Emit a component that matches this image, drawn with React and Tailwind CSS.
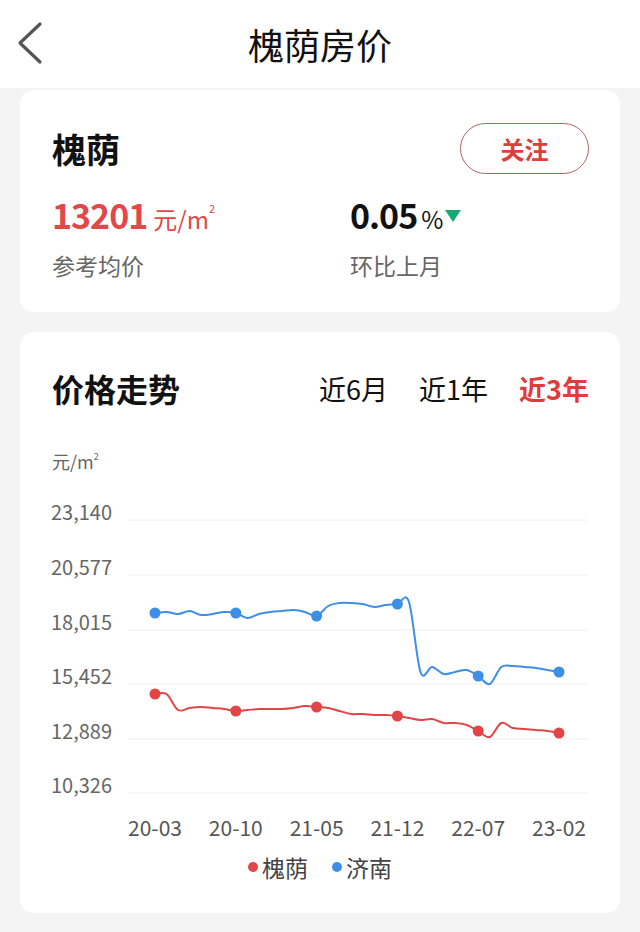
import React from "react";

const FONT = { fontFamily: '"Noto Sans CJK SC", "Noto Sans", sans-serif' };

// monthly samples 20-03 .. 23-02, markers every 7 months
const BLUE = [613, 612, 614, 611, 615, 614, 612, 613, 618, 614, 612, 611, 610, 612, 616, 606, 603, 603, 604, 607, 605, 604, 602, 672, 667, 674, 672, 670, 676, 684, 667, 666, 667, 668, 670, 672];
const RED = [694, 694, 710, 708, 707, 708, 709, 711, 710, 709, 709, 709, 708, 706, 707, 708, 711, 714, 714, 715, 715, 716, 718, 720, 719, 723, 723, 725, 731, 737, 723, 728, 729, 730, 731, 733];

const X_LABELS = ["20-03", "20-10", "21-05", "21-12", "22-07", "23-02"];
const Y_LABELS = ["23,140", "20,577", "18,015", "15,452", "12,889", "10,326"];
const GRID_Y = [520, 575, 630, 684, 739, 793];

function xAt(i) {
  return 155 + (i * 404) / 35;
}

function smoothPath(values) {
  const pts = values.map((y, i) => [xAt(i), y]);
  let d = `M${pts[0][0]},${pts[0][1]}`;
  for (let i = 0; i < pts.length - 1; i++) {
    const p0 = pts[i - 1] || pts[i];
    const p1 = pts[i];
    const p2 = pts[i + 1];
    const p3 = pts[i + 2] || p2;
    const c1x = p1[0] + (p2[0] - p0[0]) / 6;
    const c1y = p1[1] + (p2[1] - p0[1]) / 6;
    const c2x = p2[0] - (p3[0] - p1[0]) / 6;
    const c2y = p2[1] - (p3[1] - p1[1]) / 6;
    d += ` C${c1x},${c1y} ${c2x},${c2y} ${p2[0]},${p2[1]}`;
  }
  return d;
}

function Header() {
  return (
    <div className="relative h-[88px] bg-white flex items-center justify-center">
      <svg className="absolute left-[14px] top-[20px]" width="32" height="46" viewBox="0 0 32 46">
        <path d="M26 4 L6 23 L26 42" fill="none" stroke="#555" strokeWidth="3.2" strokeLinecap="round" strokeLinejoin="round" />
      </svg>
      <h1 className="text-[36px] leading-none text-[#111]">槐荫房价</h1>
    </div>
  );
}

function SummaryCard() {
  return (
    <div className="mx-[20px] mt-[2px] bg-white rounded-[14px] pt-[33px] pb-[32px] pl-[32px] pr-[31px]">
      <div className="h-[51px] flex items-center justify-between">
        <div className="text-[34px] font-bold text-[#111] leading-none">槐荫</div>
        <button className="w-[129px] h-[51px] rounded-full border-[1.5px] border-[#b9605f] text-[24px] font-bold text-[#e03c3c] leading-none">
          关注
        </button>
      </div>
      <div className="mt-[24px] grid grid-cols-[298px_1fr]">
        <div className="h-[40px] flex items-baseline text-[#e24848]">
          <span className="text-[34px] font-bold leading-none tracking-[-1px]">13201</span>
          <span className="ml-[6px] text-[24px] leading-none">
            元/m<sup className="text-[11px] align-[11px]">2</sup>
          </span>
        </div>
        <div className="h-[40px] flex items-baseline text-[#111]">
          <span className="text-[34px] font-bold leading-none tracking-[-1px]">0.05</span>
          <span className="ml-[4px] text-[24px] leading-none">%</span>
          <svg className="ml-[2px] self-start mt-[12px]" width="16" height="13" viewBox="0 0 16 13">
            <path d="M0 0 H16 L8 12 Z" fill="#18a874" />
          </svg>
        </div>
        <div className="mt-[12px] h-[30px] flex items-center text-[23px] text-[#666] leading-none">参考均价</div>
        <div className="mt-[12px] h-[30px] flex items-center text-[23px] text-[#666] leading-none">环比上月</div>
      </div>
    </div>
  );
}

function TrendChart() {
  return (
    <svg width="600" height="360" viewBox="20 490 600 360" className="block">
      {GRID_Y.map((y, i) => (
        <g key={y}>
          <line x1="128" x2="588" y1={y} y2={y} stroke="#eeeeee" strokeWidth="1" />
          <text x="51" y={y} fontSize="20" fill="#666" style={FONT}>
            {Y_LABELS[i]}
          </text>
        </g>
      ))}
      <path d={smoothPath(BLUE)} fill="none" stroke="#3d8fe6" strokeWidth="2" />
      <path d={smoothPath(RED)} fill="none" stroke="#e14545" strokeWidth="2" />
      {[0, 7, 14, 21, 28, 35].map((i) => (
        <g key={i}>
          <circle cx={xAt(i)} cy={BLUE[i]} r="5.5" fill="#3d8fe6" />
          <circle cx={xAt(i)} cy={RED[i]} r="5.5" fill="#e14545" />
        </g>
      ))}
      {X_LABELS.map((label, i) => (
        <text key={label} x={xAt(i * 7)} y="836" fontSize="21" fill="#555" textAnchor="middle" style={FONT}>
          {label}
        </text>
      ))}
    </svg>
  );
}

function TrendCard() {
  return (
    <div className="mx-[20px] mt-[20px] bg-white rounded-[14px] pt-[36px] pb-[32px]">
      <div className="h-[40px] flex items-center justify-between pl-[32px] pr-[31px]">
        <div className="text-[32px] font-bold text-[#111] leading-none">价格走势</div>
        <div className="flex items-center gap-[31px] text-[27px] leading-none">
          <span className="text-[#111]">近6月</span>
          <span className="text-[#111]">近1年</span>
          <span className="text-[#e03c3c] font-bold">近3年</span>
        </div>
      </div>
      <div className="mt-[41px] h-[24px] pl-[32px] flex items-center text-[18px] text-[#666] leading-none">
        元/m<sup className="text-[9px] align-[9px]">2</sup>
      </div>
      <div className="mt-[17px]">
        <TrendChart />
      </div>
      <div className="mt-[3px] h-[28px] flex items-center justify-center text-[23px] text-[#444] leading-none">
        <span className="w-[10px] h-[10px] rounded-full bg-[#e14545] mr-[4px]" />
        <span>槐荫</span>
        <span className="ml-[24px] w-[10px] h-[10px] rounded-full bg-[#3d8fe6] mr-[4px]" />
        <span>济南</span>
      </div>
    </div>
  );
}

export default function App() {
  return (
    <div className="w-[640px] min-h-[932px] bg-[#f4f4f4]" style={FONT}>
      <Header />
      <SummaryCard />
      <TrendCard />
    </div>
  );
}
